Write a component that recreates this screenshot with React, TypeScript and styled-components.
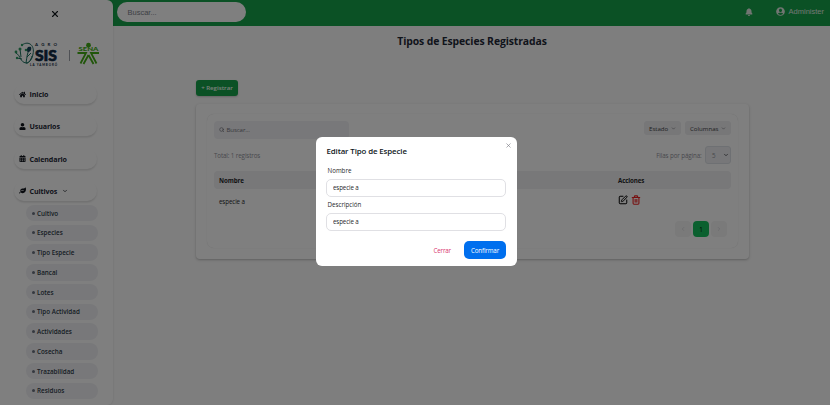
import React from "react";
import styled, { createGlobalStyle } from "styled-components";
import { FaHome, FaUser, FaCalendarAlt, FaLeaf, FaBell, FaUserCircle } from "react-icons/fa";
import { ChevronDown, ChevronLeft, ChevronRight, Search, X, SquarePen, Trash2 } from "lucide-react";

const GlobalStyle = createGlobalStyle`
  * { box-sizing: border-box; }
  html, body { margin: 0; height: 100%; overflow: hidden; background: #fff; }
  body { font-family: "Open Sans", "Noto Sans", sans-serif; color: #11181c; }
  button, input { font-family: inherit; }
`;

const Page = styled.div`
  display: flex;
  width: 830px;
  height: 405px;
  overflow: hidden;
  background: linear-gradient(#16a34a 26px, #fcfcfc 26px);
`;

const Sidebar = styled.aside`
  width: 112.5px;
  height: 405px;
  flex: none;
  display: flex;
  flex-direction: column;
  background: #fff;
  border-radius: 0 6px 6px 0;
  box-shadow: 0 0 2px rgba(0, 0, 0, 0.14);
`;

const CloseMenu = styled.div`
  height: 27px;
  padding-left: 50px;
  display: flex;
  align-items: center;
`;

const Logos = styled.div`
  height: 57px;
  padding: 13px 0 0 14px;
  display: flex;
  gap: 4px;
`;

const Menu = styled.nav`
  display: flex;
  flex-direction: column;
  gap: 12.3px;
  padding-left: 14px;
`;

const MenuItem = styled.div`
  width: 83px;
  height: 20px;
  padding: 0 0 0 5px;
  display: flex;
  align-items: center;
  gap: 3.5px;
  border-radius: 10px;
  font-size: 7.1px;
  font-weight: 700;
  letter-spacing: -0.1px;
  color: #1f2937;
  box-shadow: 0 1.5px 2px rgba(0, 0, 0, 0.13);
  svg { flex: none; color: #10151d; }
  svg:nth-of-type(2) { margin-left: 1px; }
`;

const SubMenu = styled.div`
  display: flex;
  flex-direction: column;
  gap: 3.25px;
  padding: 4px 0 0 26px;
`;

const SubItem = styled.div`
  width: 72px;
  height: 16.5px;
  padding: 0 0 0 6px;
  display: flex;
  align-items: center;
  gap: 2px;
  border-radius: 8px;
  background: #f0f1f4;
  font-size: 6.3px;
  font-weight: 600;
  color: #2f3a49;
  &::before {
    content: "";
    width: 3px;
    height: 3px;
    border-radius: 50%;
    background: #6b7280;
  }
`;

const Main = styled.main`
  flex: 1;
  min-width: 0;
`;

const TopBar = styled.header`
  height: 26px;
  padding: 0 6px 3px 4.5px;
  display: flex;
  align-items: center;
  color: #fff;
`;

const TopSearch = styled.div`
  width: 129px;
  height: 20px;
  padding-left: 10.5px;
  border-radius: 10px;
  background: #fff;
  color: #7b818b;
  font: 7.5px/21px "Liberation Sans", sans-serif;
`;

const UserArea = styled.div`
  margin-left: auto;
  display: flex;
  align-items: center;
  font: 7.5px "Liberation Sans", sans-serif;
  letter-spacing: 0;
  color: #e2ebe4;
  svg:first-child { margin-right: 23px; }
  svg:nth-child(2) { margin-right: 4px; }
`;

const Title = styled.h1`
  margin: 8px 0 0 1.5px;
  text-align: center;
  font-size: 10.4px;
  line-height: 15px;
  letter-spacing: -0.1px;
  color: #1f2937;
`;

const Content = styled.section`
  width: 553px;
  margin: 31px 0 0 83.5px;
`;

const RegisterButton = styled.button`
  display: block;
  width: 42px;
  height: 16px;
  padding: 0 0 1px;
  border: 0;
  border-radius: 3px;
  background: #16a34a;
  color: #f3fff6;
  font-size: 6.1px;
  font-weight: 600;
  box-shadow: 0 1px 2px rgba(0, 0, 0, 0.2);
`;

const Card = styled.div`
  height: 155px;
  margin-top: 8px;
  padding: 10px 11px;
  border-radius: 4px;
  background: #fff;
  box-shadow: 0 1px 2.5px rgba(0, 0, 0, 0.25);
`;

const TableBox = styled.div`
  height: 134px;
  padding: 7px 7px 0;
  border-radius: 7px;
  box-shadow: 0 0 1px rgba(0, 0, 0, 0.18);
`;

const Row = styled.div`
  display: flex;
  align-items: center;
  justify-content: space-between;
`;

const TableSearch = styled.div`
  width: 135px;
  height: 17.5px;
  margin-top: -0.5px;
  padding: 0 0 1px 5px;
  display: flex;
  align-items: center;
  gap: 2px;
  border-radius: 4px;
  background: #f1f1f4;
  font-size: 6.1px;
  letter-spacing: -0.1px;
  color: #71717a;
`;

const Filters = styled.div`
  display: flex;
  gap: 4px;
  align-items: center;
`;

const FilterButton = styled.div<{ $width: number }>`
  width: ${(p) => p.$width}px;
  height: 14px;
  margin-bottom: 4px;
  padding: 0 5px;
  display: flex;
  align-items: center;
  justify-content: space-between;
  border-radius: 3px;
  background: #eeeef1;
  font-size: 6.1px;
  color: #3f3f46;
`;

const InfoRow = styled(Row)`
  height: 18px;
  margin-top: 7px;
  font-size: 6.2px;
  letter-spacing: -0.1px;
  color: #92929b;
`;

const PageSize = styled.div`
  display: flex;
  align-items: center;
  gap: 3.5px;
`;

const SizeSelect = styled.div`
  width: 26px;
  height: 18px;
  padding: 0 1px 0 6px;
  display: flex;
  align-items: center;
  justify-content: space-between;
  border: 1px solid #dde0e6;
  border-radius: 3px;
  background: #eeeff2;
  svg { color: #3f3f46; }
`;

const TableRow = styled.div<{ $head?: boolean }>`
  display: grid;
  grid-template-columns: 399px 1fr;
  align-items: center;
  height: ${(p) => (p.$head ? 18 : 24)}px;
  margin-top: ${(p) => (p.$head ? 7 : 0)}px;
  padding: 0 5px;
  border-radius: 4px;
  background: ${(p) => (p.$head ? "#f0f0f3" : "transparent")};
  font-size: 6.2px;
  font-weight: ${(p) => (p.$head ? 700 : 400)};
  letter-spacing: -0.1px;
  color: #27272a;
`;

const Actions = styled.div`
  display: flex;
  gap: 3px;
  padding-bottom: 3px;
`;

const Pager = styled.div`
  display: flex;
  justify-content: flex-end;
  gap: 2px;
  padding: 8px 4px 0 0;
`;

const PageButton = styled.div<{ $active?: boolean }>`
  width: 16px;
  height: 16px;
  display: flex;
  align-items: center;
  justify-content: center;
  border-radius: 4px;
  background: ${(p) => (p.$active ? "#17c05e" : "#f4f4f5")};
  color: ${(p) => (p.$active ? "#000" : "#c3c3c8")};
  font-size: 6.2px;
`;

const Overlay = styled.div`
  position: fixed;
  inset: 0;
  display: flex;
  align-items: flex-start;
  padding: 137px 0 0 316px;
  background: rgba(0, 0, 0, 0.5);
`;

const Dialog = styled.div`
  width: 201px;
  height: 129px;
  padding: 0 11px 0 10px;
  border-radius: 6px;
  background: #fff;
`;

const DialogHead = styled.div`
  height: 28px;
  display: flex;
  justify-content: space-between;
  margin-right: -5.5px;
  svg { margin-top: 5px; color: #71717a; }
`;

const DialogTitle = styled.h2`
  margin: 7px 0 0 0.5px;
  font-size: 7.9px;
  font-weight: 600;
  line-height: 14px;
  letter-spacing: -0.12px;
`;

const Field = styled.label`
  display: block;
  height: 34px;
  font-size: 6.2px;
  line-height: 12px;
  color: #27272a;
  span { display: block; padding-left: 1.5px; height: 13.5px; }
`;

const Input = styled.input`
  display: block;
  width: 180px;
  height: 18px;
  padding: 0 6px 1px;
  border: 1px solid #e0e0e4;
  border-radius: 5px;
  outline: none;
  font-size: 6.2px;
  letter-spacing: -0.12px;
  color: #27272a;
`;

const DialogFoot = styled.div`
  display: flex;
  justify-content: flex-end;
  align-items: center;
  gap: 13px;
  margin-top: 8px;
`;

const DialogButton = styled.button<{ $primary?: boolean }>`
  width: ${(p) => (p.$primary ? "42px" : "auto")};
  height: 18px;
  padding: 0;
  border: 0;
  border-radius: 5px;
  background: ${(p) => (p.$primary ? "#006fee" : "none")};
  color: ${(p) => (p.$primary ? "#fff" : "#d9356f")};
  font-size: 6.2px;
  letter-spacing: -0.13px;
`;

const AgroLogo = () => (
  <svg width="45" height="27" viewBox="0 0 45 27" fill="none">
    <g stroke="#1b6f60" strokeWidth="1">
      <path d="M8 5C15 0 21 6 19 14C18 20 15 23 12 23" />
      <path d="M12 23C13 17 13 13 16 8M13 17L17 13" />
      <path d="M12 23C6 22 7 16 2 13M8 19L3 18M7 17L6 9" />
      <path d="M12 23C14 24 17 20 18 16" />
    </g>
    <g fill="#2e9a63">
      <circle cx="2" cy="12" r="1.4" /><circle cx="3" cy="18" r="1.2" /><circle cx="6" cy="9" r="1.5" />
      <circle cx="12" cy="10" r="1.3" /><circle cx="8" cy="5" r="1.2" />
      <path d="M13.5 12C12 8 14 6 17 7C18 10 16 12 13.5 12Z" fill="#17445a" />
    </g>
    <g fill="#102a43" fontFamily="Lato, sans-serif" fontWeight="900">
      <text x="21" y="6.2" fontSize="4.4" textLength="22" fontWeight="700">AGRO</text>
      <text x="21" y="20.6" fontSize="14.8" textLength="22" lengthAdjust="spacingAndGlyphs" stroke="#102a43" strokeWidth="0.6">SIS</text>
      <text x="16" y="25.5" fontSize="2.9" textLength="27">LA YAMBORÓ</text>
    </g>
  </svg>
);

const SenaLogo = () => (
  <svg width="36" height="27" viewBox="0 0 36 27">
    <path d="M6.5 10V21" stroke="#747b85" strokeWidth="0.7" />
    <g fill="#43ad16">
      <circle cx="25.5" cy="5.2" r="2.4" />
      <text x="15.5" y="11.2" fontSize="4.6" fontWeight="900" fontFamily="Lato, sans-serif" textLength="20" lengthAdjust="spacingAndGlyphs">SENA</text>
    </g>
    <g fill="none" stroke="#43ad16" strokeWidth="1.8">
      <path d="M14.5 13H23L17.5 23.5M36 13H28L33.5 23.5" />
      <path d="M25.5 15L20.5 24M25.5 15L30.5 24" />
    </g>
  </svg>
);

const menu = [
  { label: "Inicio", Icon: FaHome },
  { label: "Usuarios", Icon: FaUser },
  { label: "Calendario", Icon: FaCalendarAlt },
  { label: "Cultivos", Icon: FaLeaf, open: true },
];
const crops = ["Cultivo", "Especies", "Tipo Especie", "Bancal", "Lotes", "Tipo Actividad", "Actividades", "Cosecha", "Trazabilidad", "Residuos"];

export default function App() {
  return (
    <>
      <GlobalStyle />
      <Page>
        <Sidebar>
          <CloseMenu><X size={10} strokeWidth={2.6} /></CloseMenu>
          <Logos><AgroLogo /><SenaLogo /></Logos>
          <Menu>
            {menu.map(({ label, Icon, open }) => (
              <MenuItem key={label}>
                <Icon size={7} />{label}{open && <ChevronDown size={6} strokeWidth={2.8} />}
              </MenuItem>
            ))}
          </Menu>
          <SubMenu>{crops.map((name) => <SubItem key={name}>{name}</SubItem>)}</SubMenu>
        </Sidebar>
        <Main>
          <TopBar>
            <TopSearch>Buscar...</TopSearch>
            <UserArea><FaBell size={8} /><FaUserCircle size={9} />Administer</UserArea>
          </TopBar>
          <Title>Tipos de Especies Registradas</Title>
          <Content>
            <RegisterButton>+ Registrar</RegisterButton>
            <Card>
              <TableBox>
                <Row>
                  <TableSearch><Search size={5.5} strokeWidth={2.8} />Buscar...</TableSearch>
                  <Filters>
                    <FilterButton $width={37}>Estado <ChevronDown size={5} /></FilterButton>
                    <FilterButton $width={46}>Columnas <ChevronDown size={5} /></FilterButton>
                  </Filters>
                </Row>
                <InfoRow>
                  <span>Total: 1 registros</span>
                  <PageSize>Filas por página:<SizeSelect>5<ChevronDown size={6} strokeWidth={3} /></SizeSelect></PageSize>
                </InfoRow>
                <TableRow $head><span>Nombre</span><span>Acciones</span></TableRow>
                <TableRow>
                  <span>especie a</span>
                  <Actions>
                    <SquarePen size={10} strokeWidth={2.4} color="#000" />
                    <Trash2 size={10} strokeWidth={2.6} color="#ef2020" />
                  </Actions>
                </TableRow>
                <Pager>
                  <PageButton><ChevronLeft size={6} /></PageButton>
                  <PageButton $active>1</PageButton>
                  <PageButton><ChevronRight size={6} /></PageButton>
                </Pager>
              </TableBox>
            </Card>
          </Content>
        </Main>
      </Page>
      <Overlay>
        <Dialog role="dialog">
          <DialogHead>
            <DialogTitle>Editar Tipo de Especie</DialogTitle>
            <X size={7} strokeWidth={2} />
          </DialogHead>
          <Field><span>Nombre</span><Input defaultValue="especie a" /></Field>
          <Field><span>Descripción</span><Input defaultValue="especie a" /></Field>
          <DialogFoot>
            <DialogButton>Cerrar</DialogButton>
            <DialogButton $primary>Confirmar</DialogButton>
          </DialogFoot>
        </Dialog>
      </Overlay>
    </>
  );
}
